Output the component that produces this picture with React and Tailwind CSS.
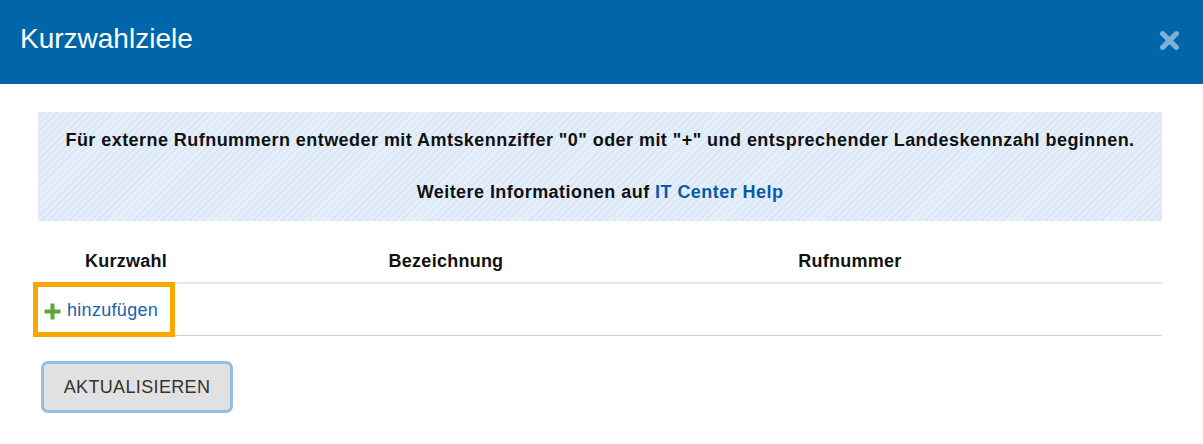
import React from "react";

export default function App() {
  return (
    <div className="w-[1203px] h-[444px] bg-white font-['Liberation_Sans',Arial,sans-serif] overflow-hidden">
      <div className="h-[84px] bg-[#0066a9] flex items-center justify-between pl-5 pr-[23px]">
        <h1 className="text-white text-[28px] leading-none -mt-[7px]">Kurzwahlziele</h1>
        <svg width="21" height="21" viewBox="0 0 20 20" className="-mt-[4px]">
          <path d="M3.5 3.5 L16.5 16.5 M16.5 3.5 L3.5 16.5" stroke="#7bb0d7" strokeWidth="5" strokeLinecap="round" />
        </svg>
      </div>
      <div className="pl-[38px] pr-[41px] pt-[28px]">
        <div className="h-[109px] bg-[repeating-linear-gradient(135deg,#e6eff9_0px,#e6eff9_3px,#d9e7f6_3px,#d9e7f6_5px)] flex flex-col items-center pt-[17px] text-[18px] tracking-[0.45px] font-bold text-[#111]">
          <p className="leading-[22px] whitespace-nowrap">
            Für externe Rufnummern entweder mit Amtskennziffer "0" oder mit "+" und entsprechender Landeskennzahl beginnen.
          </p>
          <p className="leading-[22px] mt-[30px] whitespace-nowrap">
            Weitere Informationen auf <span className="text-[#0b5aa6]">IT Center Help</span>
          </p>
        </div>
        <div className="mt-[20px] grid grid-cols-[176px_464px_344px_1fr] h-[41px] items-center text-[18px] tracking-[0.25px] font-bold text-[#111]">
          <div className="text-center">Kurzwahl</div>
          <div className="text-center">Bezeichnung</div>
          <div className="text-center">Rufnummer</div>
          <div></div>
        </div>
        <div className="relative h-[54px] border-t-2 border-[#e8e8e8] border-b border-b-[#cfcfcf] flex items-center">
          <div className="absolute left-[-5px] top-[-2px] w-[142px] h-[55px] border-[5px] border-[#f7a800]"></div>
          <div className="flex items-center pl-[6px] gap-[6px] text-[18px] tracking-[0.3px] text-[#1762ad] mt-[3px]">
            <svg width="17" height="17" viewBox="0 0 17 17">
              <path d="M8.5 0.5 V16.5 M0.5 8.5 H16.5" stroke="#5aa93a" strokeWidth="4" />
            </svg>
            <span className="-mt-[1px]">hinzufügen</span>
          </div>
        </div>
        <button className="mt-[25px] ml-[3px] w-[192px] h-[52px] rounded-[7px] border-[3px] border-[#97bcde] bg-[#e1e1e1] text-[18px] tracking-[0.35px] text-[#333] flex items-center justify-center">
          AKTUALISIEREN
        </button>
      </div>
    </div>
  );
}
